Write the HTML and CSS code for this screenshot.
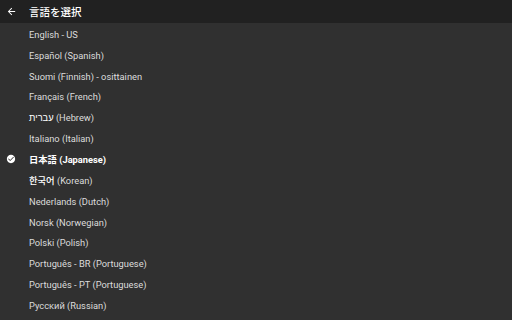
FILE: index.html
```html
<!DOCTYPE html>
<html lang="ja">
<head>
    <meta charset="UTF-8">
    <meta name="viewport" content="width=device-width, initial-scale=1.0">
    <title>言語を選択</title>
    <link rel="stylesheet" href="styles.css">
</head>
<body>
    <header class="bar">
        <svg class="back" viewBox="0 0 24 24" width="11" height="11"><path d="M20 11H7.83l5.59-5.59L12 4l-8 8 8 8 1.41-1.41L7.83 13H20v-2z" fill="#fff"/></svg>
        <div class="title">言語を選択</div>
    </header>
    <ul class="list">
        <li><span>English - US</span></li>
        <li><span>Español (Spanish)</span></li>
        <li><span>Suomi (Finnish) - osittainen</span></li>
        <li><span>Français (French)</span></li>
        <li><span><b class="native">עברית</b> (Hebrew)</span></li>
        <li><span>Italiano (Italian)</span></li>
        <li class="on">
            <svg class="check" viewBox="0 0 24 24" width="10" height="10"><path d="M12 2C6.48 2 2 6.48 2 12s4.48 10 10 10 10-4.48 10-10S17.52 2 12 2zm-2 15l-5-5 1.41-1.41L10 14.17l7.59-7.59L19 8l-9 9z" fill="#fff"/></svg>
            <span>日本語 (Japanese)</span>
        </li>
        <li><span><b class="native">한국어</b> (Korean)</span></li>
        <li><span>Nederlands (Dutch)</span></li>
        <li><span>Norsk (Norwegian)</span></li>
        <li><span>Polski (Polish)</span></li>
        <li><span>Português - BR (Portuguese)</span></li>
        <li><span>Português - PT (Portuguese)</span></li>
        <li><span>Русский (Russian)</span></li>
    </ul>
</body>
</html>
```

FILE: styles.css
```css
*{
    margin:0;
    padding:0;
}
html, body {
    height: 100%;
}
body {
    background: #303030;
    color: #dcdcdc;
    font-family: Roboto, "Noto Sans CJK JP", sans-serif;
    font-size: 9.3px;
    overflow: hidden;
}
.bar {
    height: 23px;
    background: #212121;
    display: flex;
    align-items: center;
}
.back {
    margin-left: 6px;
    margin-right: 12px;
}
.title {
    color: #fff;
    font-size: 10.5px;
    font-weight: 500;
}
.list {
    list-style: none;
    padding-top: 1px;
}
.list li {
    height: 20.85px;
    display: flex;
    align-items: center;
    padding-left: 29px;
    position: relative;
}
.list li.on {
    color: #fff;
    font-weight: 700;
}
.native {
    color: #fff;
    font-weight: 500;
}
.check {
    position: absolute;
    left: 6px;
    top: 4.5px;
}
```
